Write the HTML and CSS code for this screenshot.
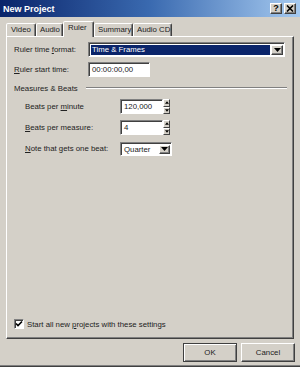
FILE: index.html
```html
<!DOCTYPE html>
<html lang="en">
<head>
    <meta charset="UTF-8">
    <title>New Project</title>
    <link rel="stylesheet" href="styles.css">
</head>
<body>
    <div class="window">
        <div class="titlebar">
            <span class="title">New Project</span>
            <div class="caption-btns">
                <span class="cap-btn">?</span>
                <span class="cap-btn">
                    <svg width="8" height="7" viewBox="0 0 8 7"><path d="M1 0.5l6 6M7 0.5l-6 6" stroke="#000" stroke-width="1.6"/></svg>
                </span>
            </div>
        </div>

        <div class="tabs">
            <div class="tab tab-video">Video</div>
            <div class="tab tab-audio">Audio</div>
            <div class="tab tab-ruler active">Ruler</div>
            <div class="tab tab-summary">Summary</div>
            <div class="tab tab-cd">Audio CD</div>
        </div>

        <div class="panel">
            <div class="row">
                <label class="lbl">Ruler time <u>f</u>ormat:</label>
                <div class="combo combo-wide">
                    <span class="combo-value selected">Time &amp; Frames</span>
                    <span class="drop-btn"><svg width="7" height="4" viewBox="0 0 7 4"><path d="M0 0h7L3.5 4z" fill="#000"/></svg></span>
                </div>
            </div>
            <div class="row">
                <label class="lbl"><u>R</u>uler start time:</label>
                <div class="field field-time">00:00:00,00</div>
            </div>

            <div class="section">
                <span>Measures &amp; Beats</span>
                <span class="section-line"></span>
            </div>

            <div class="group">
                <div class="row">
                    <label class="lbl">Beats per <u>m</u>inute</label>
                    <div class="field field-num">120,000</div>
                    <div class="spinner">
                        <span class="spin-btn"><svg width="5" height="3" viewBox="0 0 5 3"><path d="M0 3h5L2.5 0z" fill="#000"/></svg></span>
                        <span class="spin-btn"><svg width="5" height="3" viewBox="0 0 5 3"><path d="M0 0h5L2.5 3z" fill="#000"/></svg></span>
                    </div>
                </div>
                <div class="row">
                    <label class="lbl"><u>B</u>eats per measure:</label>
                    <div class="field field-num">4</div>
                    <div class="spinner">
                        <span class="spin-btn"><svg width="5" height="3" viewBox="0 0 5 3"><path d="M0 3h5L2.5 0z" fill="#000"/></svg></span>
                        <span class="spin-btn"><svg width="5" height="3" viewBox="0 0 5 3"><path d="M0 0h5L2.5 3z" fill="#000"/></svg></span>
                    </div>
                </div>
                <div class="row">
                    <label class="lbl"><u>N</u>ote that gets one beat:</label>
                    <div class="combo combo-small">
                        <span class="combo-value">Quarter</span>
                        <span class="drop-btn"><svg width="7" height="4" viewBox="0 0 7 4"><path d="M0 0h7L3.5 4z" fill="#000"/></svg></span>
                    </div>
                </div>
            </div>

            <div class="check-row">
                <span class="checkbox"><svg width="8" height="8" viewBox="0 0 8 8"><path d="M1 3.5l2 2 4-4" stroke="#000" stroke-width="1.6" fill="none"/></svg></span>
                <span>Start all new <u>p</u>rojects with these settings</span>
            </div>
        </div>

        <div class="footer">
            <button class="btn btn-default">OK</button>
            <button class="btn">Cancel</button>
        </div>
    </div>
</body>
</html>
```

FILE: styles.css
```css
* { box-sizing: border-box; }
body { margin: 0; background: #d4d0c8; font-family: "Liberation Sans", Arial, sans-serif; font-size: 7.8px; color: #222; }

.window { width: 300px; height: 367px; background: #d4d0c8; display: flex; flex-direction: column; border-bottom: 1px solid #404040; }

/* title bar */
.titlebar {
    height: 17px;
    display: flex;
    align-items: center;
    justify-content: space-between;
    padding: 0 4px 0 3px;
    background: linear-gradient(to right, #0a246a, #3a6ab0 50%, #a6caf0);
}
.title { color: #fff; font-weight: bold; font-size: 9px; }
.caption-btns { display: flex; gap: 2px; }
.cap-btn {
    width: 12px;
    height: 11px;
    background: #d4d0c8;
    border: 1px solid;
    border-color: #fff #404040 #404040 #fff;
    box-shadow: inset -1px -1px 0 #808080;
    display: flex;
    align-items: center;
    justify-content: center;
    font-weight: bold;
    font-size: 9px;
    line-height: 9px;
    color: #000;
}

/* tabs */
.tabs { height: 19px; display: flex; align-items: flex-end; padding-left: 6px; position: relative; z-index: 1; }
.tab {
    height: 13px;
    border: 1px solid;
    border-bottom: none;
    border-color: #fff #404040 transparent #fff;
    box-shadow: inset -1px 0 0 #808080;
    border-radius: 2px 2px 0 0;
    padding-left: 4px;
    line-height: 11px;
    background: #d4d0c8;
    white-space: nowrap;
}
.tab.active { height: 16px; margin-bottom: -1px; padding-left: 4px; line-height: 12px; }
.tab-video { width: 30px; }
.tab-audio { width: 27px; padding-left: 3px; }
.tab-ruler { width: 31px; }
.tab-summary { width: 39px; padding-left: 3px; }
.tab-cd { width: 39px; padding-left: 3px; }

/* page */
.panel {
    margin-left: 6px;
    width: 288px;
    height: 303px;
    border: 1px solid;
    border-color: #fff #404040 #404040 #fff;
    box-shadow: inset -1px -1px 0 #808080;
    display: flex;
    flex-direction: column;
    padding: 5px 0 9px 7px;
}
.row { display: flex; align-items: center; height: 15px; margin-bottom: 5px; }
.lbl { width: 74px; }

.field, .combo {
    height: 15px;
    background: #fff;
    border: 1px solid;
    border-color: #808080 #fff #fff #808080;
    box-shadow: inset 1px 1px 0 #404040;
}
.field { padding: 0 3px; line-height: 13px; }
.field-time { width: 62px; }
.field-num { width: 43px; }

.combo { display: flex; align-items: stretch; padding: 2px 1px 1px 2px; }
.combo-wide { width: 197px; }
.combo-small { width: 52px; height: 14px; }
.combo-value { flex: 1; padding-left: 1px; line-height: 10px; }
.combo-value.selected { background: #0a246a; color: #fff; margin-right: 1px; }
.drop-btn {
    width: 12px;
    background: #d4d0c8;
    border: 1px solid;
    border-color: #fff #404040 #404040 #fff;
    box-shadow: inset -1px -1px 0 #808080;
    display: flex;
    align-items: center;
    justify-content: center;
}
.combo-small .drop-btn { width: 11px; }

.spinner { display: flex; flex-direction: column; width: 7px; height: 15px; }
.spin-btn {
    flex: 1;
    background: #d4d0c8;
    border: 1px solid;
    border-color: #fff #404040 #404040 #fff;
    display: flex;
    align-items: center;
    justify-content: center;
}
.spin-btn svg { width: 4px; height: 3px; }

.section { display: flex; align-items: center; height: 12px; margin-bottom: 5px; padding-right: 6px; }
.section-line { flex: 1; margin-left: 8px; border-top: 1px solid #808080; border-bottom: 1px solid #fff; }

.group { padding-left: 11px; }
.group .row { margin-bottom: 6px; }
.group .lbl { width: 95px; }

.check-row { margin-top: auto; display: flex; align-items: center; height: 10px; gap: 3px; }
.checkbox {
    width: 10px;
    height: 10px;
    background: #fff;
    border: 1px solid;
    border-color: #808080 #fff #fff #808080;
    box-shadow: inset 1px 1px 0 #404040;
    display: flex;
    align-items: center;
    justify-content: center;
}

/* buttons */
.footer { flex: 1; display: flex; justify-content: flex-end; align-items: flex-start; gap: 4px; padding: 4px 5px 0 0; border-bottom: 1px solid #808080; }
.btn {
    width: 54px;
    height: 19px;
    margin: 0;
    padding: 0;
    font: inherit;
    color: #222;
    background: #d4d0c8;
    border: 1px solid;
    border-color: #fff #404040 #404040 #fff;
    box-shadow: inset -1px -1px 0 #808080;
}
.btn-default { border-color: #404040; box-shadow: inset 1px 1px 0 #fff, inset -1px -1px 0 #808080; }
```
